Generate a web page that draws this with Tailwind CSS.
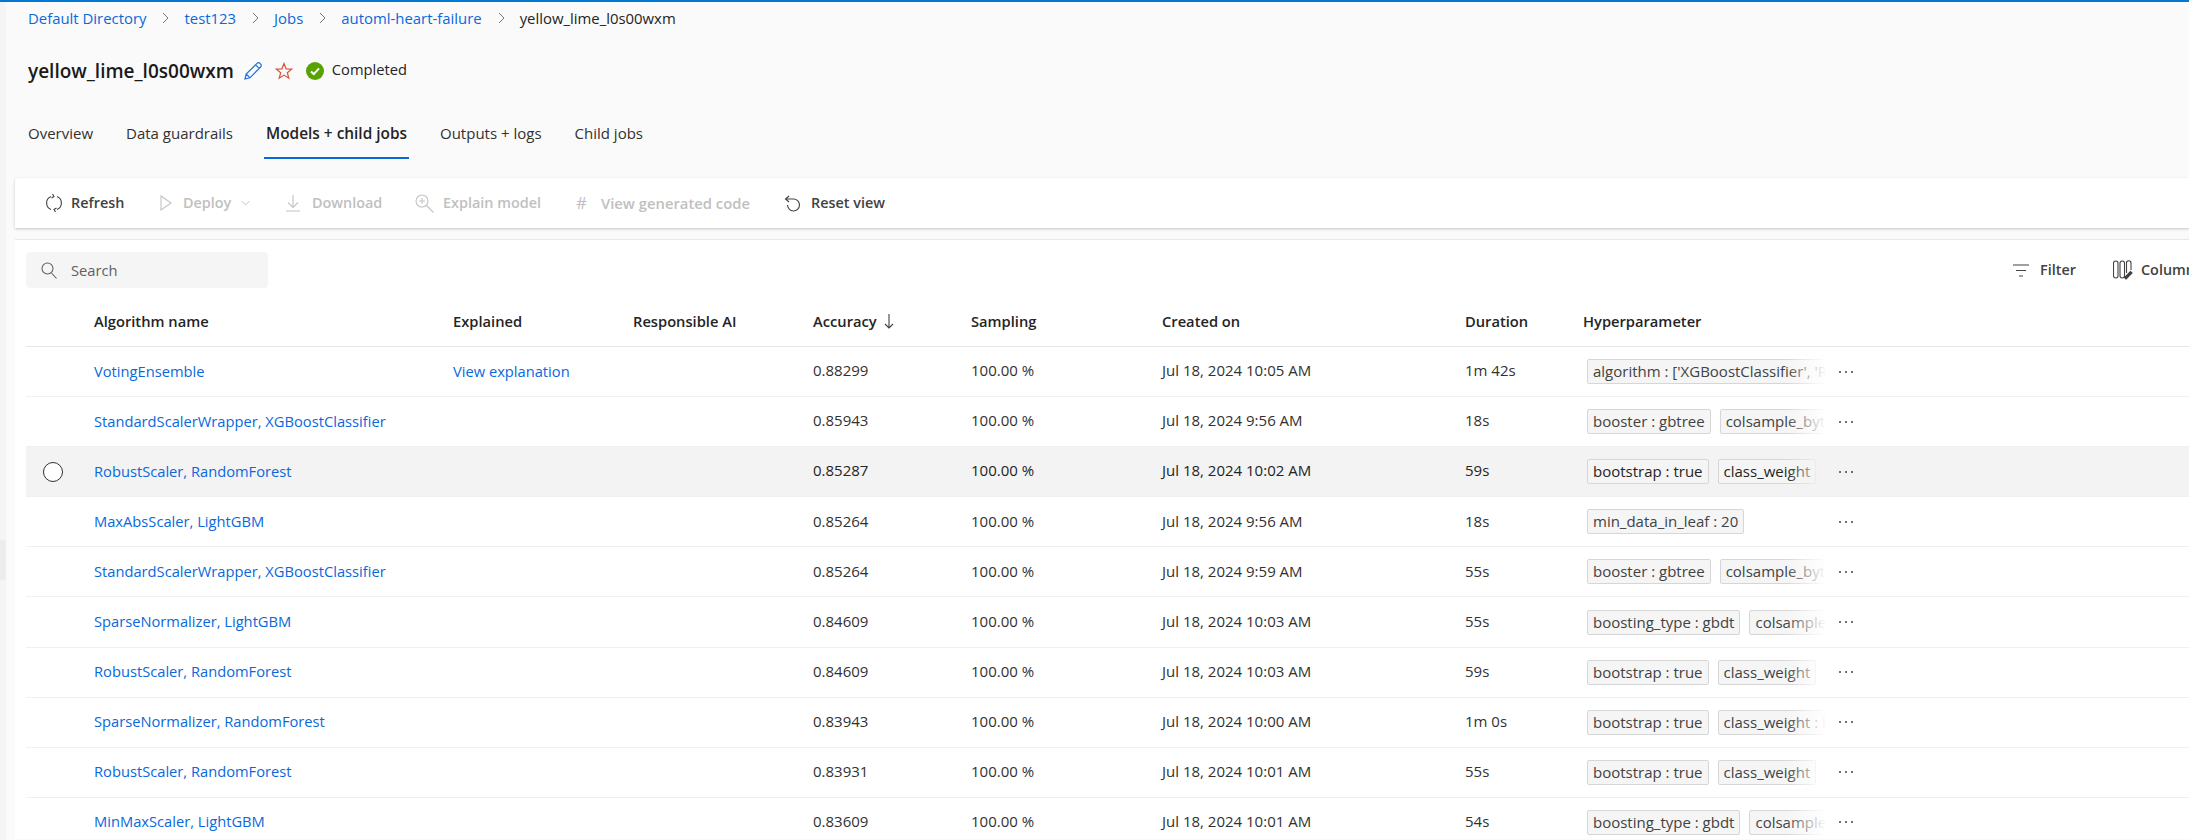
<!DOCTYPE html>
<html lang="en">
<head>
<meta charset="UTF-8">
<title>yellow_lime_l0s00wxm</title>
<script src="https://cdn.jsdelivr.net/npm/@tailwindcss/browser@4"></script>
</head>
<body class="bg-[#fafafa] h-[840px] overflow-hidden font-['Open_Sans',sans-serif] text-[14.7px] text-[#323130]">
<div class="h-[2px] bg-[#0078d4]"></div>
<div class="flex h-[838px]">
  <!-- left rail -->
  <div class="w-[6px] shrink-0 bg-[#f5f5f5] pt-[538px]"><div class="h-[40px] bg-[#ededed]"></div></div>
  <main class="flex-1 min-w-0">
    <!-- breadcrumb -->
    <nav class="h-[38px] pb-[6px] pl-[22px] flex items-center text-[14.9px] text-[#0b68dc]">
      <span>Default Directory</span>
      <svg class="w-[38px] h-[12px]" viewBox="0 0 38 12" fill="none" stroke="#777" stroke-width="1"><path d="M17 1l5 5-5 5"/></svg>
      <span>test123</span>
      <svg class="w-[38px] h-[12px]" viewBox="0 0 38 12" fill="none" stroke="#777" stroke-width="1"><path d="M17 1l5 5-5 5"/></svg>
      <span>Jobs</span>
      <svg class="w-[38px] h-[12px]" viewBox="0 0 38 12" fill="none" stroke="#777" stroke-width="1"><path d="M17 1l5 5-5 5"/></svg>
      <span>automl-heart-failure</span>
      <svg class="w-[38px] h-[12px]" viewBox="0 0 38 12" fill="none" stroke="#777" stroke-width="1"><path d="M17 1l5 5-5 5"/></svg>
      <span class="text-[#242424]">yellow_lime_l0s00wxm</span>
    </nav>
    <!-- title -->
    <div class="h-[62px] pl-[22px] flex items-center">
      <h1 class="text-[19px] font-semibold text-[#1a1a1a]">yellow_lime_l0s00wxm</h1>
      <svg class="ml-[9px] w-[20px] h-[20px]" viewBox="0 0 20 20" fill="none" stroke="#1f6fe0" stroke-width="1.2"><path d="M2 18l1.2-5L14 2.4a2 2 0 0 1 3 0l.6.6a2 2 0 0 1 0 3L7 16.8zM3.2 13L7 16.8M12.6 3.8l3.6 3.6"/></svg>
      <svg class="ml-[12px] w-[18px] h-[18px]" viewBox="0 0 18 18" fill="none" stroke="#d1543a" stroke-width="1.2"><path d="M9 1.5l2.1 5.3 5.6.3-4.4 3.6 1.5 5.5L9 13.1l-4.8 3.1 1.5-5.5L1.3 7.1l5.6-.3z"/></svg>
      <svg class="ml-[13px] w-[18px] h-[18px]" viewBox="0 0 18 18"><circle cx="9" cy="9" r="9" fill="#57a300"/><path d="M5 9.5l2.8 2.6L13 6.4" fill="none" stroke="#fff" stroke-width="2"/></svg>
      <span class="ml-[8px] text-[#242424] -mt-[3px]">Completed</span>
    </div>
    <!-- tabs -->
    <div class="h-[57px] pl-[22px] flex items-start gap-[33px] text-[15px] text-[#323130]">
      <span class="h-[57px] pt-[20px]">Overview</span>
      <span class="h-[57px] pt-[20px]">Data guardrails</span>
      <span class="h-[57px] pt-[20px] font-semibold text-[15.4px] text-[#242424] relative">Models + child jobs<span class="absolute -left-[2px] -right-[2px] bottom-[0px] h-[2px] bg-[#0b68dc]"></span></span>
      <span class="h-[57px] pt-[20px]">Outputs + logs</span>
      <span class="h-[57px] pt-[20px]">Child jobs</span>
    </div>
    <div class="h-[19px]"></div>
    <!-- toolbar -->
    <div class="ml-[9px] h-[50px] bg-white rounded-tl-[4px] shadow-[0_1px_3px_rgba(0,0,0,0.22)] flex items-center pl-[30px] font-semibold text-[14.4px] text-[#424242] whitespace-nowrap">
      <svg class="w-[18px] h-[20px]" viewBox="0 0 18 20" fill="none" stroke="#424242" stroke-width="1.1"><path d="M6 3.5a7 7 0 0 0 0 13M12 16.5a7 7 0 0 0 0-13M7.5 1L9 3.5 6.5 5M10.5 19L9 16.5l2.5-1.5"/></svg>
      <span class="ml-[8px] w-[89px]">Refresh</span>
      <svg class="w-[12px] h-[16px]" viewBox="0 0 12 16" fill="none" stroke="#c4c4c4" stroke-width="1.1"><path d="M1 1l10 7-10 7z"/></svg>
      <span class="ml-[11px] w-[51px] text-[#c0c0c0]">Deploy</span>
      <svg class="ml-[7px] w-[9px] h-[6px]" viewBox="0 0 9 6" fill="none" stroke="#c4c4c4"><path d="M.5 1l4 4 4-4"/></svg>
      <svg class="ml-[35px] w-[16px] h-[18px]" viewBox="0 0 16 18" fill="none" stroke="#c4c4c4" stroke-width="1.1"><path d="M8 1v12M3 8.5L8 13.5l5-5M1 17h14"/></svg>
      <span class="ml-[11px] text-[#c0c0c0] w-[103px]">Download</span>
      <svg class="w-[19px] h-[19px]" viewBox="0 0 19 19" fill="none" stroke="#c4c4c4" stroke-width="1.1"><circle cx="7" cy="7" r="6"/><path d="M11.5 11.5l7 7M7 4v6M4 7h6"/></svg>
      <span class="ml-[9px] text-[#c0c0c0] w-[133px]">Explain model</span>
      <span class="text-[#c0c0c0] font-normal text-[17px] w-[25px]">#</span>
      <span class="text-[#c0c0c0] text-[14.8px] w-[183px]">View generated code</span>
      <svg class="w-[18px] h-[17px]" viewBox="0 0 18 17" fill="none" stroke="#424242" stroke-width="1.1"><path d="M5 1L1.5 4 5 7M1.5 4H10a6 6 0 1 1-6.5 6"/></svg>
      <span class="ml-[9px]">Reset view</span>
    </div>
    <div class="h-[11px]"></div>
    <!-- table card -->
    <section class="ml-[9px] bg-white border-t border-[#e8e8e8] overflow-hidden h-[600px]">
      <div class="h-[57px] pt-[12px] pl-[11px] flex items-start">
        <div class="w-[242px] h-[36px] bg-[#f5f5f5] rounded-[4px] flex items-center pl-[15px] text-[#616161]">
          <svg class="w-[16px] h-[17px]" viewBox="0 0 16 17" fill="none" stroke="#616161" stroke-width="1.1"><circle cx="6.5" cy="6.5" r="5.5"/><path d="M10.5 11l5 5.5"/></svg>
          <span class="ml-[14px]">Search</span>
        </div>
        <div class="ml-auto w-[176px] shrink-0 h-[36px] flex items-center font-semibold text-[14.4px] text-[#424242] whitespace-nowrap overflow-hidden">
          <svg class="w-[16px] h-[13px] shrink-0" viewBox="0 0 16 13" fill="none" stroke="#424242" stroke-width="1.2"><path d="M0 1h16M3 6.5h10M6 12h4"/></svg>
          <span class="ml-[11px] w-[73px] shrink-0">Filter</span>
          <svg class="w-[20px] h-[20px] shrink-0" viewBox="0 0 20 20" fill="none" stroke="#424242" stroke-width="1.1"><rect x=".5" y="1" width="4.5" height="17" rx="2.2"/><rect x="7" y="1" width="4.5" height="17" rx="2.2"/><path d="M13.5 13V3a2 2 0 0 1 4.5 0v7"/><path d="M13 19l6-6-1.5-1.5-6 6z" fill="#424242"/></svg>
          <span class="ml-[8px]">Columns</span>
        </div>
      </div>
      <div class="ml-[11px]">
        <div class="h-[50px] grid grid-cols-[68px_359px_180px_180px_158px_191px_303px_118px_1fr] items-center border-b border-[#e6e6e6] font-semibold text-[#242424]">
          <span></span><span>Algorithm name</span><span>Explained</span><span>Responsible AI</span>
          <span class="flex items-center gap-[7px]">Accuracy <svg class="w-[10px] h-[16px]" viewBox="0 0 10 16" fill="none" stroke="#424242" stroke-width="1.1"><path d="M5 1v14M1 11l4 4 4-4"/></svg></span>
          <span>Sampling</span><span>Created on</span><span>Duration</span><span>Hyperparameter</span>
        </div>
        <div id="rows"></div>
      </div>
    </section>
  </main>
</div>
<script>
  // chips per row: the list is cut off by the cell, as in the grid
  const rows = [
    { name: "VotingEnsemble", explain: "View explanation", acc: "0.88299", date: "Jul 18, 2024 10:05 AM", dur: "1m 42s", chips: ["algorithm : ['XGBoostClassifier', 'RandomForest']"] },
    { name: "StandardScalerWrapper, XGBoostClassifier", acc: "0.85943", date: "Jul 18, 2024 9:56 AM", dur: "18s", chips: ["booster : gbtree", "colsample_bytree : 0.7"] },
    { name: "RobustScaler, RandomForest", acc: "0.85287", date: "Jul 18, 2024 10:02 AM", dur: "59s", chips: ["bootstrap : true", "class_weight", "criterion : gini"], hover: true },
    { name: "MaxAbsScaler, LightGBM", acc: "0.85264", date: "Jul 18, 2024 9:56 AM", dur: "18s", chips: ["min_data_in_leaf : 20"] },
    { name: "StandardScalerWrapper, XGBoostClassifier", acc: "0.85264", date: "Jul 18, 2024 9:59 AM", dur: "55s", chips: ["booster : gbtree", "colsample_bytree : 0.7"] },
    { name: "SparseNormalizer, LightGBM", acc: "0.84609", date: "Jul 18, 2024 10:03 AM", dur: "55s", chips: ["boosting_type : gbdt", "colsample_bytree : 0.9"] },
    { name: "RobustScaler, RandomForest", acc: "0.84609", date: "Jul 18, 2024 10:03 AM", dur: "59s", chips: ["bootstrap : true", "class_weight", "criterion : gini"] },
    { name: "SparseNormalizer, RandomForest", acc: "0.83943", date: "Jul 18, 2024 10:00 AM", dur: "1m 0s", chips: ["bootstrap : true", "class_weight : balanced"] },
    { name: "RobustScaler, RandomForest", acc: "0.83931", date: "Jul 18, 2024 10:01 AM", dur: "55s", chips: ["bootstrap : true", "class_weight", "criterion : gini"] },
    { name: "MinMaxScaler, LightGBM", acc: "0.83609", date: "Jul 18, 2024 10:01 AM", dur: "54s", chips: ["boosting_type : gbdt", "colsample_bytree : 0.9"] }
  ];

  document.getElementById('rows').innerHTML = rows.map(r => `
    <div class="h-[50.1px] grid grid-cols-[68px_359px_180px_180px_158px_191px_303px_118px_1fr] items-center border-b border-[#f0f0f0] text-[15px] ${r.hover ? 'bg-[#f3f3f3] text-[#242424]' : ''}">
      <span class="pl-[17px]">${r.hover ? '<span class="block w-[20px] h-[20px] rounded-full border border-[#323130] bg-white"></span>' : ''}</span>
      <span class="pb-[2px] text-[#0b68dc] text-[14.7px]">${r.name}</span>
      <span class="pb-[2px] text-[#0b68dc] text-[14.7px]">${r.explain || ''}</span>
      <span></span>
      <span class="pb-[2px]">${r.acc}</span>
      <span class="pb-[2px]">100.00 %</span>
      <span class="pb-[2px]">${r.date}</span>
      <span class="pb-[2px]">${r.dur}</span>
      <div class="flex items-center">
        <div class="relative ml-[4px] w-[239px] overflow-hidden flex gap-[9px] whitespace-nowrap">
          ${r.chips.map(c => `<span class="shrink-0 h-[25px] leading-[23px] px-[5px] border border-[#d6d6d6] rounded-[2px] bg-[#f5f5f5] ${r.hover ? 'text-[#242424]' : 'text-[#424242]'}">${c}</span>`).join('')}
          <span class="absolute right-0 top-0 h-[25px] w-[40px] bg-gradient-to-r from-transparent ${r.hover ? 'to-[#f3f3f3]' : 'to-white'}"></span>
        </div>
        <svg class="ml-[12px] w-[16px] h-[4px]" viewBox="0 0 16 4" fill="#424242"><circle cx="2" cy="2" r="1"/><circle cx="8" cy="2" r="1"/><circle cx="14" cy="2" r="1"/></svg>
      </div>
    </div>`).join('');
</script>
</body>
</html>
